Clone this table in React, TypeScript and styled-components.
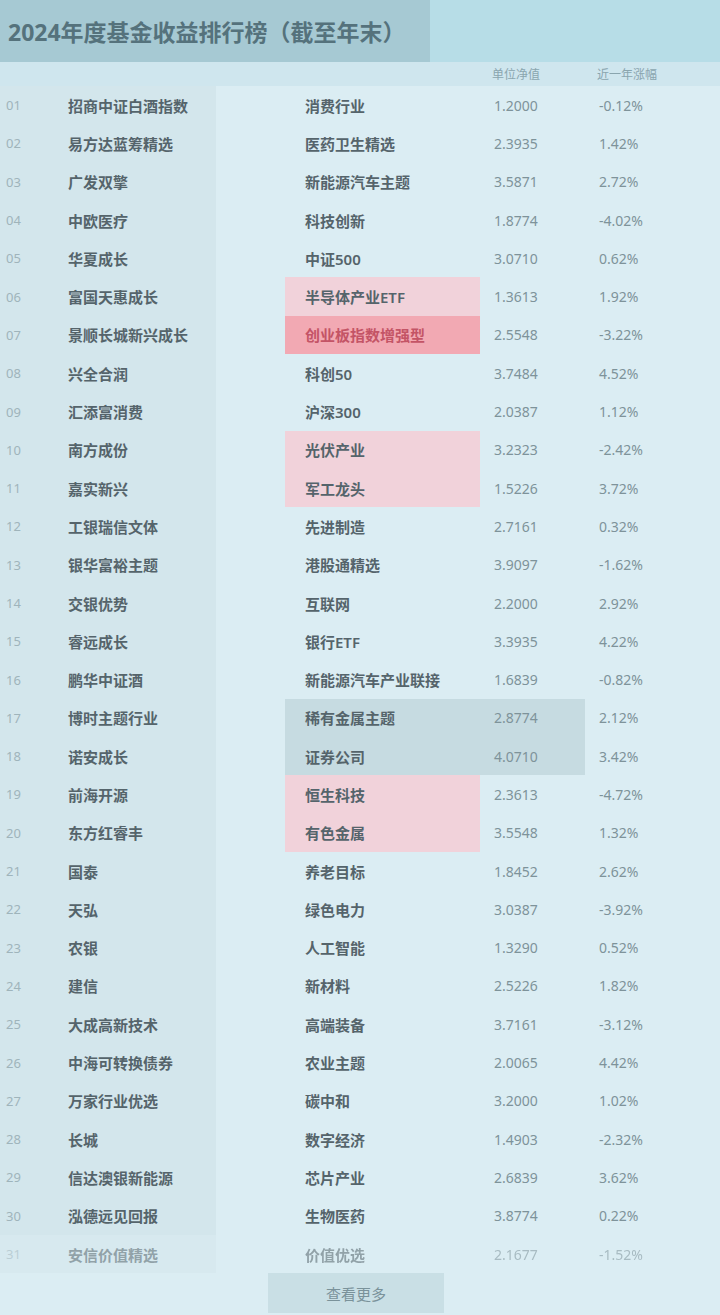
import React from 'react'
import styled, { createGlobalStyle } from 'styled-components'

type Row = {
  no: string
  name: string
  code: string
  price: string
  change: string
  mark?: 'pink' | 'red' | 'grey'
}

const names = [
  '招商中证白酒指数', '易方达蓝筹精选', '广发双擎', '中欧医疗', '华夏成长',
  '富国天惠成长', '景顺长城新兴成长', '兴全合润', '汇添富消费', '南方成份',
  '嘉实新兴', '工银瑞信文体', '银华富裕主题', '交银优势', '睿远成长',
  '鹏华中证酒', '博时主题行业', '诺安成长', '前海开源', '东方红睿丰',
  '国泰', '天弘', '农银', '建信', '大成高新技术', '中海可转换债券', '万家行业优选',
  '长城', '信达澳银新能源', '泓德远见回报', '安信价值精选',
]

const second = [
  '消费行业', '医药卫生精选', '新能源汽车主题', '科技创新', '中证500',
  '半导体产业ETF', '创业板指数增强型', '科创50', '沪深300', '光伏产业',
  '军工龙头', '先进制造', '港股通精选', '互联网', '银行ETF',
  '新能源汽车产业联接', '稀有金属主题', '证券公司', '恒生科技', '有色金属',
  '养老目标', '绿色电力', '人工智能', '新材料', '高端装备',
  '农业主题', '碳中和', '数字经济', '芯片产业', '生物医药', '价值优选',
]

const marks: Record<number, Row['mark']> = {
  5: 'pink',
  6: 'red',
  9: 'pink',
  10: 'pink',
  16: 'grey',
  17: 'grey',
  18: 'pink',
  19: 'pink',
}

const rows: Row[] = names.map((n, i) => ({
  no: String(i + 1).padStart(2, '0'),
  name: n,
  code: second[i],
  price: (1.2 + ((i * 37) % 90) / 31).toFixed(4),
  change: ((i % 3 === 0 ? -1 : 1) * (((i * 13) % 47) / 10 + 0.12)).toFixed(2) + '%',
  mark: marks[i],
}))

export default function App() {
  return (
    <Page>
      <GlobalStyle />
      <TitleBar>
        <Title>2024年度基金收益排行榜（截至年末）</Title>
      </TitleBar>
      <HeadRow>
        <HeadCell />
        <HeadCell />
        <HeadCell>单位净值</HeadCell>
        <HeadCell>近一年涨幅</HeadCell>
      </HeadRow>
      <Table>
        {rows.map((r, i) => (
          <TableRow key={r.no} $faded={i === rows.length - 1}>
            <NameCell>
              <No>{r.no}</No>
              <Name>{r.name}</Name>
            </NameCell>
            <Sub $mark={r.mark}>{r.code}</Sub>
            <Num $mark={r.mark === 'grey' ? 'grey' : undefined}>{r.price}</Num>
            <Num>{r.change}</Num>
          </TableRow>
        ))}
      </Table>
      <Footer>
        <MoreButton>查看更多</MoreButton>
      </Footer>
    </Page>
  )
}

const GlobalStyle = createGlobalStyle`
  body {
    margin: 0;
    background: #dbedf3;
    font-family: "Noto Sans", "Noto Sans CJK SC", sans-serif;
  }
`

const Page = styled.div`
  width: 720px;
  min-height: 1315px;
  background: #dbedf3;
  color: #4b5a62;
`

const TitleBar = styled.div`
  height: 62px;
  background: #b7dde7;
  display: flex;
  align-items: center;
`

const Title = styled.div`
  width: 430px;
  height: 62px;
  padding: 0 8px;
  box-sizing: border-box;
  display: flex;
  align-items: center;
  background: #a6c9d3;
  color: #55727c;
  font-size: 23px;
  font-weight: 700;
  white-space: nowrap;
  overflow: hidden;
`

const HeadRow = styled.div`
  display: grid;
  grid-template-columns: 275px 205px 105px 135px;
  height: 24px;
  align-items: center;
  background: #cfe6ee;
  font-size: 12px;
  color: #8aa5ae;
`

const HeadCell = styled.div`
  padding: 0 12px;
`

const Table = styled.div`
  display: flex;
  flex-direction: column;
`

const TableRow = styled.div<{ $faded?: boolean }>`
  display: grid;
  grid-template-columns: 275px 205px 105px 135px;
  height: 38.3px;
  align-items: stretch;
  font-size: 15px;
  opacity: ${(p) => (p.$faded ? 0.55 : 1)};
`

const NameCell = styled.div`
  display: flex;
  align-items: center;
  gap: 28px;
  padding-left: 6px;
  background: #d3e6ec;
  width: 210px;
`

const No = styled.span`
  width: 34px;
  color: #9fb4bb;
  font-size: 13px;
`

const Name = styled.span`
  color: #55646b;
  font-weight: 600;
  white-space: nowrap;
`

const markBg = (m?: Row['mark']) =>
  m === 'red' ? '#f2a9b3' : m === 'pink' ? '#f1d2da' : m === 'grey' ? '#c6dbe1' : 'transparent'

const Sub = styled.div<{ $mark?: Row['mark'] }>`
  display: flex;
  align-items: center;
  padding-left: 20px;
  margin-left: 10px;
  background: ${(p) => markBg(p.$mark)};
  color: ${(p) => (p.$mark === 'red' ? '#c45466' : '#55646b')};
  font-weight: 600;
  white-space: nowrap;
  overflow: hidden;
`

const Num = styled.div<{ $mark?: Row['mark'] }>`
  display: flex;
  align-items: center;
  padding-left: 14px;
  background: ${(p) => markBg(p.$mark)};
  color: #7e939a;
  font-size: 14px;
`

const Footer = styled.div`
  display: flex;
  padding: 0 0 0 268px;
`

const MoreButton = styled.div`
  width: 176px;
  height: 40px;
  background: #c9dfe5;
  display: flex;
  align-items: center;
  justify-content: center;
  color: #7a929a;
  font-size: 15px;
`
